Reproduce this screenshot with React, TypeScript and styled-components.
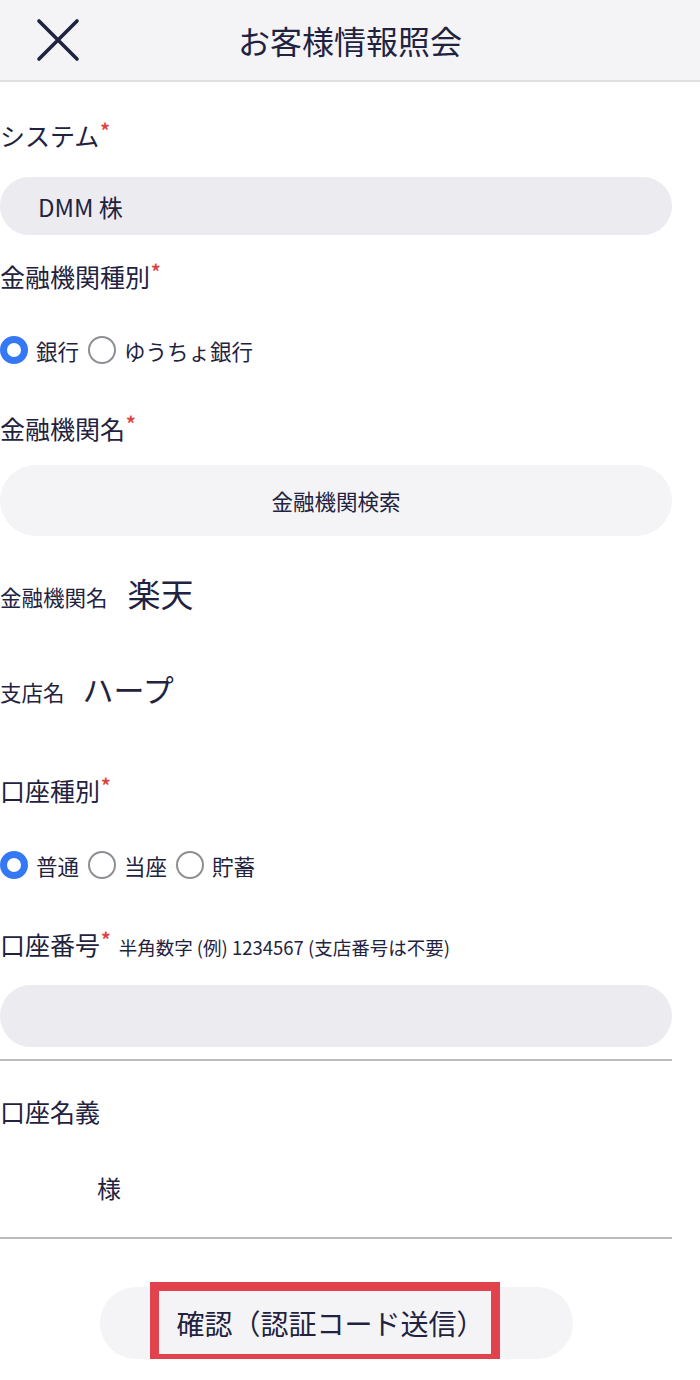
import React from "react";
import styled, { createGlobalStyle } from "styled-components";

const Global = createGlobalStyle`
  html, body { margin: 0; padding: 0; background: #ffffff; }
  body { font-family: "Noto Sans CJK JP", "Noto Sans", sans-serif; color: #1f2340; }
`;

const Page = styled.div`
  width: 700px;
  display: flex;
  flex-direction: column;
`;

const Header = styled.header`
  height: 80px;
  background: #f4f4f7;
  border-bottom: 2px solid #e0e0e3;
  display: flex;
  align-items: center;
  position: relative;
`;

const CloseBtn = styled.button`
  margin-left: 34px;
  width: 48px;
  height: 48px;
  padding: 0;
  border: none;
  background: transparent;
  display: flex;
  align-items: center;
  justify-content: center;
`;

const Title = styled.h1`
  position: absolute;
  left: 0;
  right: 0;
  text-align: center;
  margin: 0;
  font-size: 32px;
  font-weight: 400;
  line-height: 80px;
  color: #1f2340;
  pointer-events: none;
`;

const Form = styled.main`
  width: 672px;
  display: flex;
  flex-direction: column;
`;

const Label = styled.div<{ $mt: number }>`
  margin-top: ${(p) => p.$mt}px;
  font-size: 25px;
  line-height: 34px;
  height: 34px;
  color: #1f2340;
  display: flex;
  align-items: flex-start;
  white-space: nowrap;
`;

const Req = styled.span`
  color: #e0433f;
  font-size: 19px;
  line-height: 24px;
  margin-left: 1px;
  font-weight: 700;
`;

const Hint = styled.span`
  font-size: 18.5px;
  line-height: 34px;
  margin-left: 8px;
  margin-top: 3px;
  color: #1f2340;
`;

const Field = styled.div<{ $mt: number; $h: number }>`
  margin-top: ${(p) => p.$mt}px;
  height: ${(p) => p.$h}px;
  border-radius: 999px;
  background: #ebebf0;
  display: flex;
  align-items: center;
  padding-left: 38px;
  font-size: 24px;
  color: #1f2340;
`;

const SearchBtn = styled.button<{ $mt: number }>`
  margin-top: ${(p) => p.$mt}px;
  height: 71px;
  width: 100%;
  border: none;
  border-radius: 999px;
  background: #f4f4f7;
  font-family: inherit;
  font-size: 21.5px;
  color: #1f2340;
`;

const RadioRow = styled.div<{ $mt: number }>`
  margin-top: ${(p) => p.$mt}px;
  height: 34px;
  display: flex;
  align-items: center;
`;

const RadioItem = styled.label`
  display: flex;
  align-items: center;
  margin-right: 9px;
  font-size: 21.5px;
  color: #1f2340;
`;

const Circle = styled.span<{ $on: boolean }>`
  box-sizing: border-box;
  width: 28px;
  height: 28px;
  border-radius: 50%;
  margin-right: 8px;
  background: #ffffff;
  border: ${(p) => (p.$on ? "7px solid #3478f6" : "2px solid #8e8e93")};
`;

const InfoRow = styled.div<{ $mt: number }>`
  margin-top: ${(p) => p.$mt}px;
  height: 44px;
  display: flex;
  align-items: center;
`;

const InfoKey = styled.span`
  font-size: 21.5px;
  margin-top: 6px;
  color: #1f2340;
`;

const InfoVal = styled.span<{ $size: number; $ml: number }>`
  font-size: ${(p) => p.$size}px;
  margin-left: ${(p) => p.$ml}px;
  color: #1f2340;
`;

const Divider = styled.hr<{ $mt: number }>`
  margin: ${(p) => p.$mt}px 0 0 0;
  border: none;
  height: 2px;
  background: #bdbdbf;
  width: 672px;
`;

const Honorific = styled.div<{ $mt: number }>`
  margin-top: ${(p) => p.$mt}px;
  padding-left: 97px;
  font-size: 24px;
  line-height: 34px;
  color: #1f2340;
`;

const Footer = styled.div`
  margin-top: 48px;
  display: flex;
  justify-content: flex-start;
  padding-left: 100px;
`;

const SubmitBtn = styled.button`
  position: relative;
  width: 473px;
  height: 72px;
  border: none;
  border-radius: 999px;
  background: #f4f4f7;
  font-family: inherit;
  font-size: 28px;
  color: #1f2340;
  padding: 0;
`;

const Highlight = styled.span`
  position: absolute;
  left: 50px;
  top: -5px;
  width: 350px;
  height: 81px;
  box-sizing: border-box;
  border: 9px solid #e2424b;
`;

const SubmitText = styled.span`
  position: relative;
  margin-left: -12px;
`;

const Radio = ({ on, children }: { on: boolean; children: React.ReactNode }) => (
  <RadioItem>
    <Circle $on={on} />
    {children}
  </RadioItem>
);

export default function App() {
  return (
    <>
      <Global />
      <Page>
        <Header>
          <CloseBtn aria-label="close">
            <svg width="44" height="44" viewBox="0 0 44 44">
              <path d="M3 3 L41 41 M41 3 L3 41" stroke="#1f2340" strokeWidth="3.6" strokeLinecap="round" />
            </svg>
          </CloseBtn>
          <Title>お客様情報照会</Title>
        </Header>
        <Form>
          <Label $mt={36}>
            システム<Req>*</Req>
          </Label>
          <Field $mt={25} $h={58}>DMM 株</Field>

          <Label $mt={24}>
            金融機関種別<Req>*</Req>
          </Label>
          <RadioRow $mt={40}>
            <Radio on>銀行</Radio>
            <Radio on={false}>ゆうちょ銀行</Radio>
          </RadioRow>

          <Label $mt={44}>
            金融機関名<Req>*</Req>
          </Label>
          <SearchBtn $mt={20}>金融機関検索</SearchBtn>

          <InfoRow $mt={35}>
            <InfoKey>金融機関名</InfoKey>
            <InfoVal $size={33} $ml={20}>楽天</InfoVal>
          </InfoRow>
          <InfoRow $mt={51}>
            <InfoKey>支店名</InfoKey>
            <InfoVal $size={31} $ml={18}>ハープ</InfoVal>
          </InfoRow>

          <Label $mt={63}>
            口座種別<Req>*</Req>
          </Label>
          <RadioRow $mt={41}>
            <Radio on>普通</Radio>
            <Radio on={false}>当座</Radio>
            <Radio on={false}>貯蓄</Radio>
          </RadioRow>

          <Label $mt={45}>
            口座番号<Req>*</Req>
            <Hint>半角数字 (例) 1234567 (支店番号は不要)</Hint>
          </Label>
          <Field $mt={24} $h={62} />
          <Divider $mt={12} />

          <Label $mt={33}>口座名義</Label>
          <Honorific $mt={43}>様</Honorific>
          <Divider $mt={32} />
        </Form>
        <Footer>
          <SubmitBtn>
            <Highlight />
            <SubmitText>確認（認証コード送信）</SubmitText>
          </SubmitBtn>
        </Footer>
      </Page>
    </>
  );
}
